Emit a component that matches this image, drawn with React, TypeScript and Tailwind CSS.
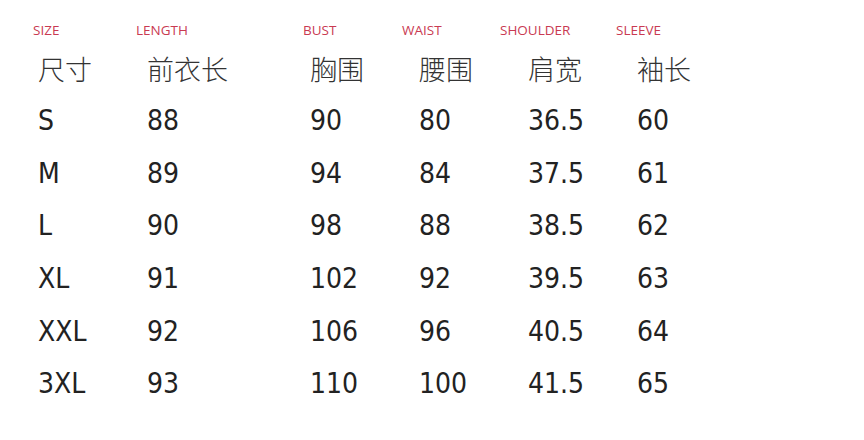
const labels = [
  { text: 'SIZE', w: 'w-[103px]' },
  { text: 'LENGTH', w: 'w-[167px]' },
  { text: 'BUST', w: 'w-[99px]' },
  { text: 'WAIST', w: 'w-[98px]' },
  { text: 'SHOULDER', w: 'w-[116px]' },
  { text: 'SLEEVE', w: 'w-[100px]' },
]

const colWidths = ['w-[109px]', 'w-[163px]', 'w-[109px]', 'w-[109px]', 'w-[109px]', 'w-[109px]']

const heads = ['尺寸', '前衣长', '胸围', '腰围', '肩宽', '袖长']

const rows = [
  ['S', '88', '90', '80', '36.5', '60'],
  ['M', '89', '94', '84', '37.5', '61'],
  ['L', '90', '98', '88', '38.5', '62'],
  ['XL', '91', '102', '92', '39.5', '63'],
  ['XXL', '92', '106', '96', '40.5', '64'],
  ['3XL', '93', '110', '100', '41.5', '65'],
]

export default function App() {
  return (
    <div className="w-[864px] h-[440px] bg-white overflow-hidden">
      <div className="flex items-center h-[20px] mt-[20px] pl-[33px] text-[13.5px] text-[#c93a52] font-['Open_Sans','Liberation_Sans',sans-serif]">
        {labels.map(l => (
          <div key={l.text} className={l.w}>
            {l.text}
          </div>
        ))}
      </div>

      <div className="flex items-center h-[40px] mt-[9px] pl-[38px] text-[27px] text-[#333] font-['Noto_Sans_CJK_SC',sans-serif] font-light">
        {heads.map((h, i) => (
          <div key={h} className={colWidths[i]}>
            {h}
          </div>
        ))}
      </div>

      <div className="flex flex-col mt-[6px] pl-[38px] text-[#222] font-['DejaVu_Sans_Condensed','DejaVu_Sans',sans-serif] text-[28px]">
        {rows.map(r => (
          <div key={r[0]} className="flex items-center h-[52.6px]">
            {r.map((c, i) => (
              <div key={i} className={colWidths[i]}>
                {c}
              </div>
            ))}
          </div>
        ))}
      </div>
    </div>
  )
}
